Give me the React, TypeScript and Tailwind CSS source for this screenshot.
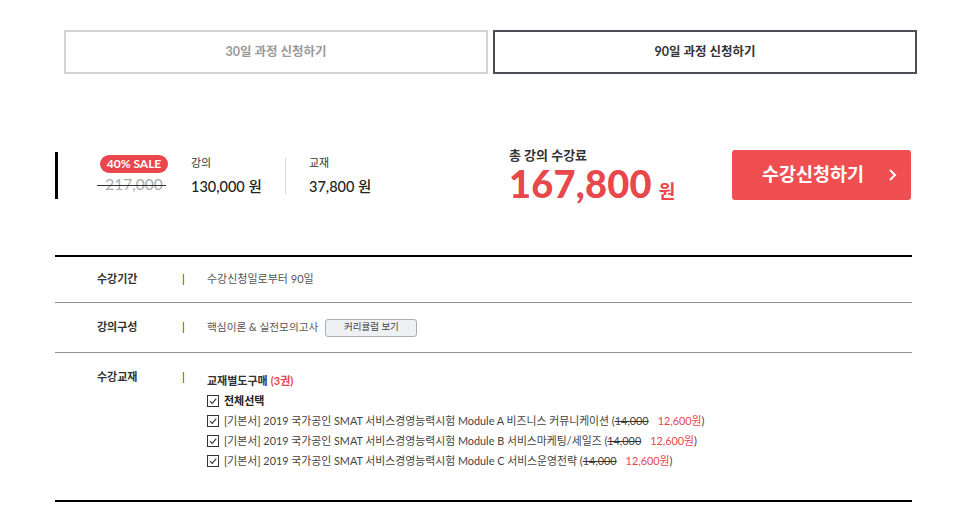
import React from "react";

const font = { fontFamily: "Lato, 'Noto Sans CJK KR', sans-serif" };

function Check() {
  return (
    <span className="inline-flex w-[12px] h-[12px] border border-[#333] bg-white items-center justify-center mr-[5px] shrink-0">
      <svg width="10" height="10" viewBox="0 0 10 10">
        <path d="M2 5.2 L4.2 7.4 L8.3 2.6" fill="none" stroke="#333" strokeWidth="1.1" />
      </svg>
    </span>
  );
}

function Book({ name }: { name: string }) {
  return (
    <div className="flex items-center h-[20px] text-[10.85px] text-[#444]">
      <Check />
      <span>
        [기본서] 2019 국가공인 SMAT 서비스경영능력시험 {name} (
        <span className="line-through decoration-[#333]">14,000</span>
        <span className="text-[#e8474c] ml-[9px]">12,600원</span>)
      </span>
    </div>
  );
}

export default function App() {
  return (
    <div className="w-[966px] h-[520px] bg-white overflow-hidden" style={font}>
      {/* tabs */}
      <div className="flex gap-[5px] pl-[64px] pt-[30px]">
        <div className="w-[424px] h-[44px] border-2 border-[#d3d3d3] flex items-center justify-center text-[12.5px] font-bold text-[#9a9a9a]">
          30일 과정 신청하기
        </div>
        <div className="w-[424px] h-[44px] border-2 border-[#4b4e58] flex items-center justify-center text-[12.5px] font-bold text-[#333]">
          90일 과정 신청하기
        </div>
      </div>

      {/* price */}
      <div className="flex items-center ml-[55px] mt-[76px] h-[51px]">
        <div className="w-[3px] h-[47px] bg-black" />
        <div className="flex flex-col items-center ml-[38px] w-[76px] -mt-[3px]">
          <span className="h-[18px] px-[7px] rounded-full bg-[#e8474c] text-white text-[12px] font-bold flex items-center">
            40% SALE
          </span>
          <span className="relative mt-[2px] text-[15.5px] text-[#aaa] leading-[18px]">
            217,000
            <span className="absolute left-[-8px] right-[-3px] top-[10px] h-[1px] bg-[#333]" />
          </span>
        </div>
        <div className="flex flex-col ml-[19px] w-[94px]">
          <span className="text-[11px] text-[#333] leading-[14px]">강의</span>
          <span className="text-[14.5px] text-[#222] font-medium mt-[8px] leading-[18px]">130,000 원</span>
        </div>
        <div className="w-px h-[36px] bg-[#ddd]" />
        <div className="flex flex-col ml-[23px] w-[200px]">
          <span className="text-[11px] text-[#333] leading-[14px]">교재</span>
          <span className="text-[14.5px] text-[#222] font-medium mt-[8px] leading-[18px]">37,800 원</span>
        </div>
        <div className="flex flex-col w-[223px] -mt-[2px]">
          <span className="text-[13px] font-bold text-[#333] leading-[14px]">총 강의 수강료</span>
          <div className="flex items-baseline mt-[5px]">
            <span className="text-[38px] font-black text-[#e8474c] leading-[32px] tracking-[0.2px]">167,800</span>
            <span className="text-[18px] font-bold text-[#e8474c] ml-[7px] leading-[20px]">원</span>
          </div>
        </div>
        <div className="w-[179px] h-[50px] bg-[#ef4f51] rounded-[3px] flex items-center text-white -mt-[2px]">
          <span className="text-[18.5px] font-bold ml-[30px]">수강신청하기</span>
          <svg className="ml-[24px]" width="10" height="14" viewBox="0 0 10 14">
            <path d="M2 2 L7 7 L2 12" fill="none" stroke="white" strokeWidth="2" />
          </svg>
        </div>
      </div>

      {/* table */}
      <div className="ml-[55px] mt-[54px] w-[857px] border-t-2 border-b-2 border-black">
        <div className="flex items-center h-[46px] border-b border-[#8f8f8f] text-[11px]">
          <span className="w-[127px] pl-[42px] font-bold text-[#333]">수강기간</span>
          <span className="w-[25px] text-[#333]">|</span>
          <span className="text-[#555] text-[11px]">수강신청일로부터 90일</span>
        </div>
        <div className="flex items-center h-[50px] border-b border-[#8f8f8f] text-[11px]">
          <span className="w-[127px] pl-[42px] font-bold text-[#333]">강의구성</span>
          <span className="w-[25px] text-[#333]">|</span>
          <span className="text-[#555] text-[10.7px]">핵심이론 &amp; 실전모의고사</span>
          <span className="ml-[7px] w-[92px] h-[18px] border border-[#a9acb3] bg-[#eef0f4] rounded-[3px] flex items-center justify-center text-[9.5px] text-[#444]">
            커리큘럼 보기
          </span>
        </div>
        <div className="flex h-[147px] pt-[16px] text-[11px]">
          <span className="w-[127px] pl-[42px] font-bold text-[#333] leading-[16px]">수강교재</span>
          <span className="w-[25px] text-[#333] leading-[16px]">|</span>
          <div className="flex flex-col mt-[2px]">
            <div className="h-[20px] flex items-center text-[11px] font-bold text-[#333]">
              교재별도구매 <span className="text-[#e8474c] ml-[3px]">(3권)</span>
            </div>
            <div className="flex items-center h-[20px] text-[11px] font-bold text-[#222]">
              <Check />
              전체선택
            </div>
            <Book name="Module A 비즈니스 커뮤니케이션" />
            <Book name="Module B 서비스마케팅/세일즈" />
            <Book name="Module C 서비스운영전략" />
          </div>
        </div>
      </div>
    </div>
  );
}
